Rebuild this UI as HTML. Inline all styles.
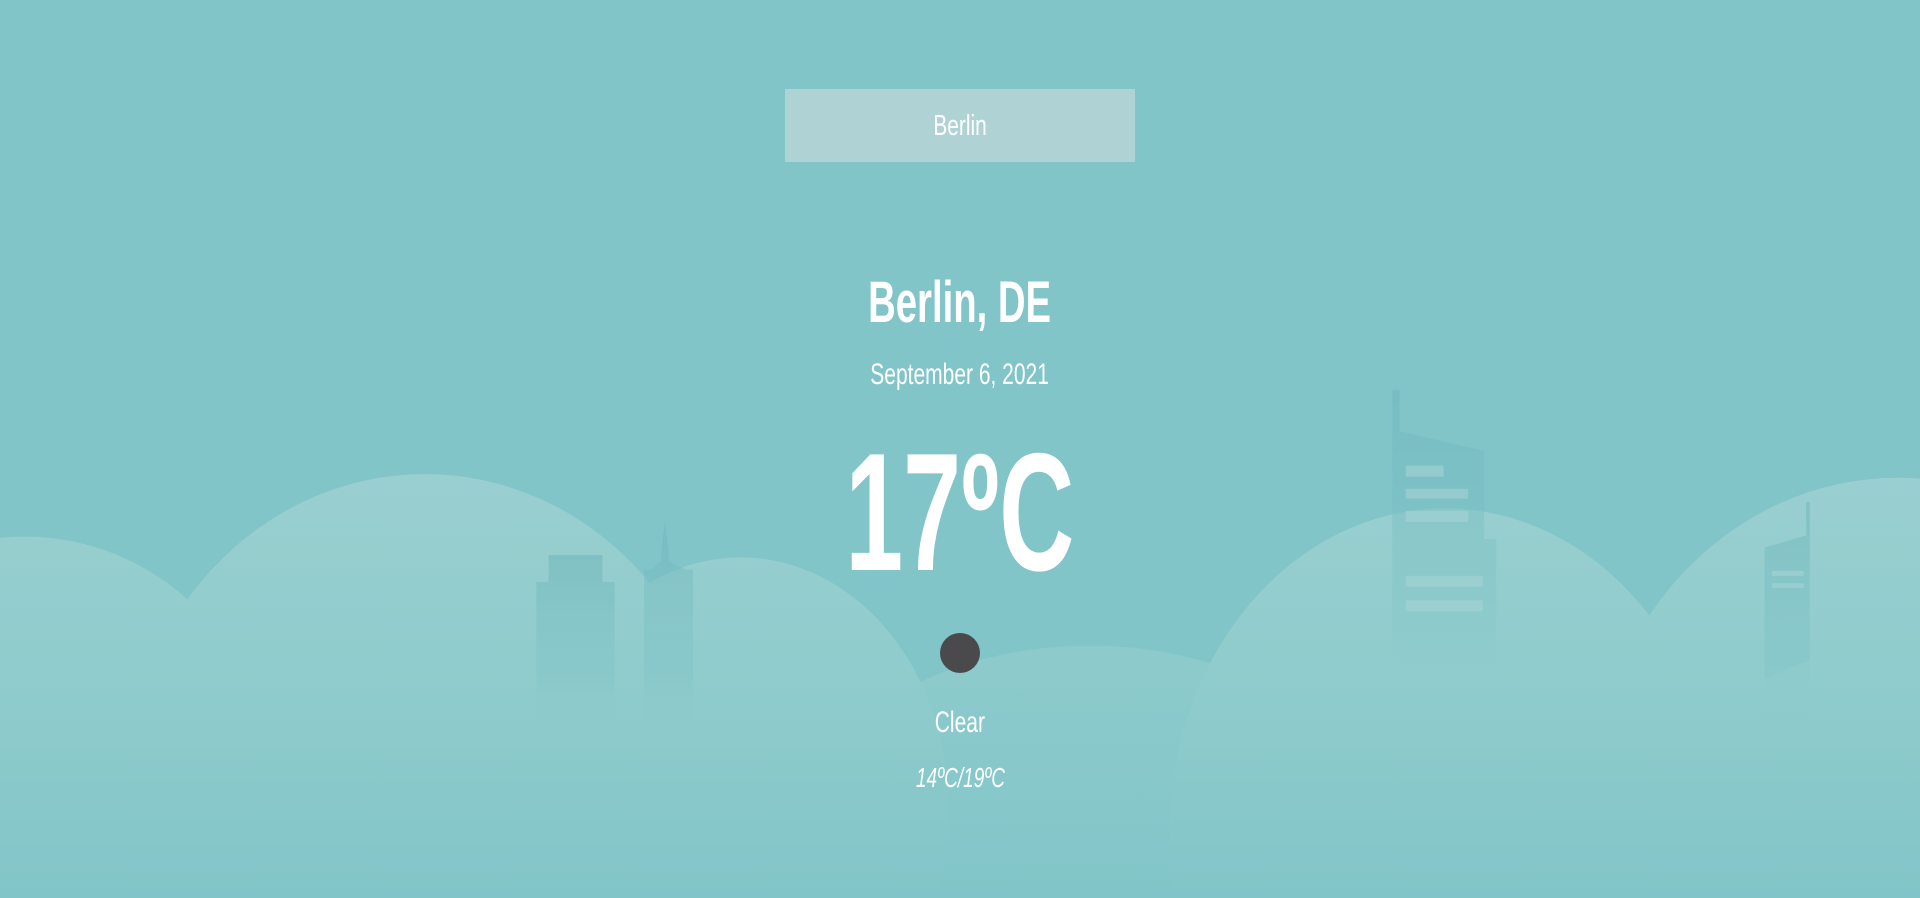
<!DOCTYPE html>
<html><head><meta charset="utf-8">
<style>
html,body{margin:0;padding:0;width:1920px;height:898px;overflow:hidden;background:#81c5c9;font-family:"Liberation Sans",sans-serif;color:#fff;position:relative}
#bg{position:absolute;left:0;top:0;width:1920px;height:898px}
.t{position:absolute;left:0;width:1920px;text-align:center;white-space:nowrap;line-height:1}
.t span{display:inline-block;transform:scaleX(.72);transform-origin:center}
.box{position:absolute;left:785px;top:89px;width:350px;height:73px;background:#afd3d5}
</style></head><body>
<svg id="bg" viewBox="0 0 1568 733" preserveAspectRatio="none">
<defs>
<linearGradient id="bf" x1="0" y1="0" x2="0" y2="1">
<stop offset="0" stop-color="#6fb6bb" stop-opacity=".55"/>
<stop offset=".7" stop-color="#7cc2c6" stop-opacity=".35"/>
<stop offset="1" stop-color="#86c8ca" stop-opacity="0"/>
</linearGradient>
<linearGradient id="hf" gradientUnits="userSpaceOnUse" x1="0" y1="385" x2="0" y2="733">
<stop offset="0" stop-color="#9acfd0"/>
<stop offset=".55" stop-color="#8ecbcc"/>
<stop offset="1" stop-color="#82c5c8"/>
</linearGradient>
</defs>
<g fill="url(#hf)">
<ellipse cx="20" cy="640" rx="200" ry="202"/>
<ellipse cx="347" cy="650" rx="245" ry="263"/>
<ellipse cx="605" cy="660" rx="170" ry="205"/>
<ellipse cx="1180" cy="680" rx="225" ry="265"/>
<ellipse cx="1550" cy="660" rx="250" ry="270"/>
</g>
<g fill="url(#bf)">
<path d="M448 453H492V475H502V590H438V475H448Z"/>
<path d="M543 425L546 450V458L560 465H566V600H526V465H532L540 458V450Z"/>
<path d="M1137 318H1143V352L1212 368V440L1222 440V560H1137Z"/>
<path d="M1475 410H1478V600H1441V447L1475 437Z"/>
</g>
<g fill="#a6d3d4" opacity=".6">
<rect x="1148" y="380" width="31" height="9"/>
<rect x="1148" y="399" width="51" height="8"/>
<rect x="1148" y="417" width="51" height="9"/>
<rect x="1148" y="470" width="63" height="9"/>
<rect x="1148" y="490" width="63" height="9"/>
<rect x="1447" y="466" width="26" height="4"/>
<rect x="1447" y="476" width="26" height="4"/>
</g>
<g fill="url(#hf)" opacity=".75">
<ellipse cx="890" cy="720" rx="260" ry="193"/>
<ellipse cx="1540" cy="740" rx="210" ry="210"/>
</g>
</svg>
<div class="box"></div>
<div class="t" style="top:112px;font-size:29px"><span>Berlin</span></div>
<div class="t" style="top:274px;font-size:58px;font-weight:bold"><span style="transform:scaleX(.66)">Berlin, DE</span></div>
<div class="t" style="top:360px;font-size:30px"><span style="transform:scaleX(.7)">September 6, 2021</span></div>
<div class="t" style="top:428px;font-size:168px;font-weight:bold"><span style="transform:scaleX(.62)">17ºC</span></div>
<div style="position:absolute;left:940px;top:633px;width:40px;height:40px;border-radius:50%;background:#4a4a4c"></div>
<div class="t" style="top:708px;font-size:30px"><span style="transform:scaleX(.7)">Clear</span></div>
<div class="t" style="top:764px;font-size:28px;font-style:italic"><span style="transform:scaleX(.68)">14ºC/19ºC</span></div>
</body></html>
